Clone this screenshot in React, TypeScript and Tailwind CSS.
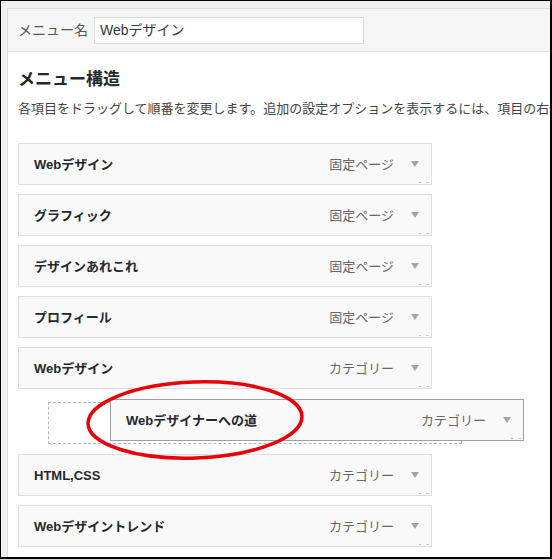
import React from "react";

type MenuItem = { title: string; kind: string };

const items: MenuItem[] = [
  { title: "Webデザイン", kind: "固定ページ" },
  { title: "グラフィック", kind: "固定ページ" },
  { title: "デザインあれこれ", kind: "固定ページ" },
  { title: "プロフィール", kind: "固定ページ" },
  { title: "Webデザイン", kind: "カテゴリー" },
];

const itemsAfter: MenuItem[] = [
  { title: "HTML,CSS", kind: "カテゴリー" },
  { title: "Webデザイントレンド", kind: "カテゴリー" },
];

const font = "font-['Liberation_Sans','Noto_Sans_CJK_JP',sans-serif]";

function Triangle() {
  return (
    <svg width="8" height="6" viewBox="0 0 8 6" className="ml-[17px] shrink-0">
      <path d="M0 0 L8 0 L4 6 Z" fill="#a0a5aa" />
    </svg>
  );
}

function MenuRow({ item, dragging }: { item: MenuItem; dragging?: boolean }) {
  return (
    <div
      className={
        "relative flex items-center h-[42px] w-[414px] box-border pl-[15px] pr-[12px] bg-[#f9f9f9] border " +
        (dragging ? "border-[#a0a0a0]" : "border-[#dfdfdf]")
      }
    >
      <span className="flex-1 text-[13px] font-bold text-[#23282d] leading-none">{item.title}</span>
      <span className="text-[13px] text-[#666] leading-none">{item.kind}</span>
      <Triangle />
      <span className="absolute right-[10px] bottom-[1px] w-[2px] h-[1px] bg-[#bbb]" />
      <span className="absolute right-[2px] bottom-[1px] w-[3px] h-[1px] bg-[#ccc]" />
    </div>
  );
}

export default function App() {
  return (
    <div
      className={
        "relative w-[552px] h-[559px] overflow-hidden box-border border-l border-t border-r-2 border-b-2 border-black bg-[#f1f1f1] pl-[6px] pt-[7px] flex " +
        font
      }
    >
      <div className="flex-1 flex flex-col border-l border-t border-[#dcdcdc] bg-white min-w-0">
        {/* menu name header */}
        <div className="flex items-center bg-[#f5f5f5] border-b border-[#dfdfdf] pl-[10px] pt-[8px] pb-[7px]">
          <span className="w-[76px] text-[14px] text-[#555]">メニュー名</span>
          <div className="flex items-center w-[270px] h-[27px] bg-white border border-[#dcdcdc] px-[5px] text-[14px] text-[#32373c]">
            Webデザイン
          </div>
        </div>

        {/* menu structure */}
        <div className="flex flex-col pl-[10px] pt-[16px]">
          <h3 className="text-[17px] font-bold leading-[24px] text-[#23282d]">メニュー構造</h3>
          <p className="mt-[7px] text-[13px] leading-[20px] text-[#444] whitespace-nowrap">
            各項目をドラッグして順番を変更します。追加の設定オプションを表示するには、項目の右側の矢印をクリックしてください。
          </p>

          <div className="mt-[24px] flex flex-col gap-[9px]">
            {items.map((it, i) => (
              <MenuRow key={i} item={it} />
            ))}
          </div>

          {/* drop placeholder */}
          <div className="mt-[13px] ml-[30px] w-[414px] h-[42px] box-border border border-dashed border-[#b4b9be]" />

          <div className="mt-[10px] flex flex-col gap-[9px]">
            {itemsAfter.map((it, i) => (
              <MenuRow key={i} item={it} />
            ))}
          </div>
        </div>
      </div>

      {/* item being dragged */}
      <div className="absolute left-[109px] top-[398px]">
        <MenuRow item={{ title: "Webデザイナーへの道", kind: "カテゴリー" }} dragging />
      </div>

      {/* red annotation circle */}
      <svg
        className="absolute left-[78px] top-[374px]"
        width="232"
        height="92"
        viewBox="0 0 232 92"
      >
        <ellipse
          cx="116"
          cy="45"
          rx="107"
          ry="38"
          fill="none"
          stroke="#e8000b"
          strokeWidth="3.5"
          transform="rotate(-2 116 45)"
        />
      </svg>
    </div>
  );
}
